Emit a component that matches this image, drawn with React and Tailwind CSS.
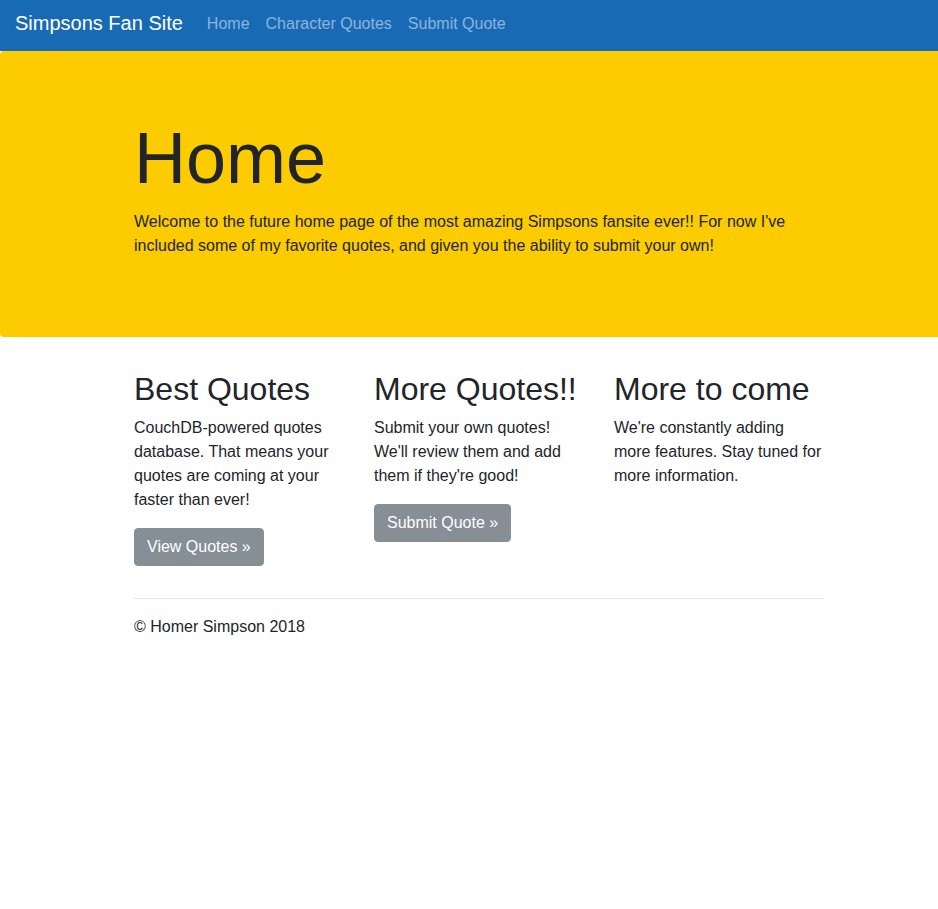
const navLinks = ["Home", "Character Quotes", "Submit Quote"];

const features = [
  {
    title: "Best Quotes",
    text: "CouchDB-powered quotes database. That means your quotes are coming at your faster than ever!",
    action: "View Quotes »",
  },
  {
    title: "More Quotes!!",
    text: "Submit your own quotes! We'll review them and add them if they're good!",
    action: "Submit Quote »",
  },
  {
    title: "More to come",
    text: "We're constantly adding more features. Stay tuned for more information.",
  },
];

function Navbar() {
  return (
    <nav className="flex items-start bg-[#196ab5] px-[15px] pt-1 pb-[7px]">
      <a href="#" className="mr-4 py-1 text-xl leading-[30px] text-white">
        Simpsons Fan Site
      </a>
      <ul className="flex">
        {navLinks.map((label) => (
          <li key={label}>
            <a href="#" className="block p-2 leading-6 text-white/50">
              {label}
            </a>
          </li>
        ))}
      </ul>
    </nav>
  );
}

function Container({ children }) {
  return (
    <div className="pl-5">
      <div className="mx-auto max-w-[720px] px-[15px]">{children}</div>
    </div>
  );
}

function Feature({ title, text, action }) {
  return (
    <section>
      <h2 className="mb-2 text-[32px] leading-[38px] whitespace-nowrap">{title}</h2>
      <p className="mb-4">{text}</p>
      {action && (
        <a
          href="#"
          className="inline-block rounded border border-[#868e96] bg-[#868e96] px-3 py-[6px] text-white"
        >
          {action}
        </a>
      )}
    </section>
  );
}

export default function App() {
  return (
    <div className="min-h-screen bg-white font-['Liberation_Sans',Arial,sans-serif] text-base leading-6 text-[#212529]">
      <Navbar />
      <main>
        <header className="mb-[33px] rounded-l bg-[#fdcc00] pt-16 pb-[79px]">
          <Container>
            <h1 className="mb-[9px] text-[72px] leading-[86px]">Home</h1>
            <p>
              Welcome to the future home page of the most amazing Simpsons fansite ever!! For now
              I've included some of my favorite quotes, and given you the ability to submit your
              own!
            </p>
          </Container>
        </header>
        <Container>
          <div className="grid grid-cols-3 gap-[30px]">
            {features.map((feature) => (
              <Feature key={feature.title} {...feature} />
            ))}
          </div>
          <hr className="mt-8 mb-4 border-black/10" />
        </Container>
      </main>
      <footer>
        <Container>
          <p>© Homer Simpson 2018</p>
        </Container>
      </footer>
    </div>
  );
}
